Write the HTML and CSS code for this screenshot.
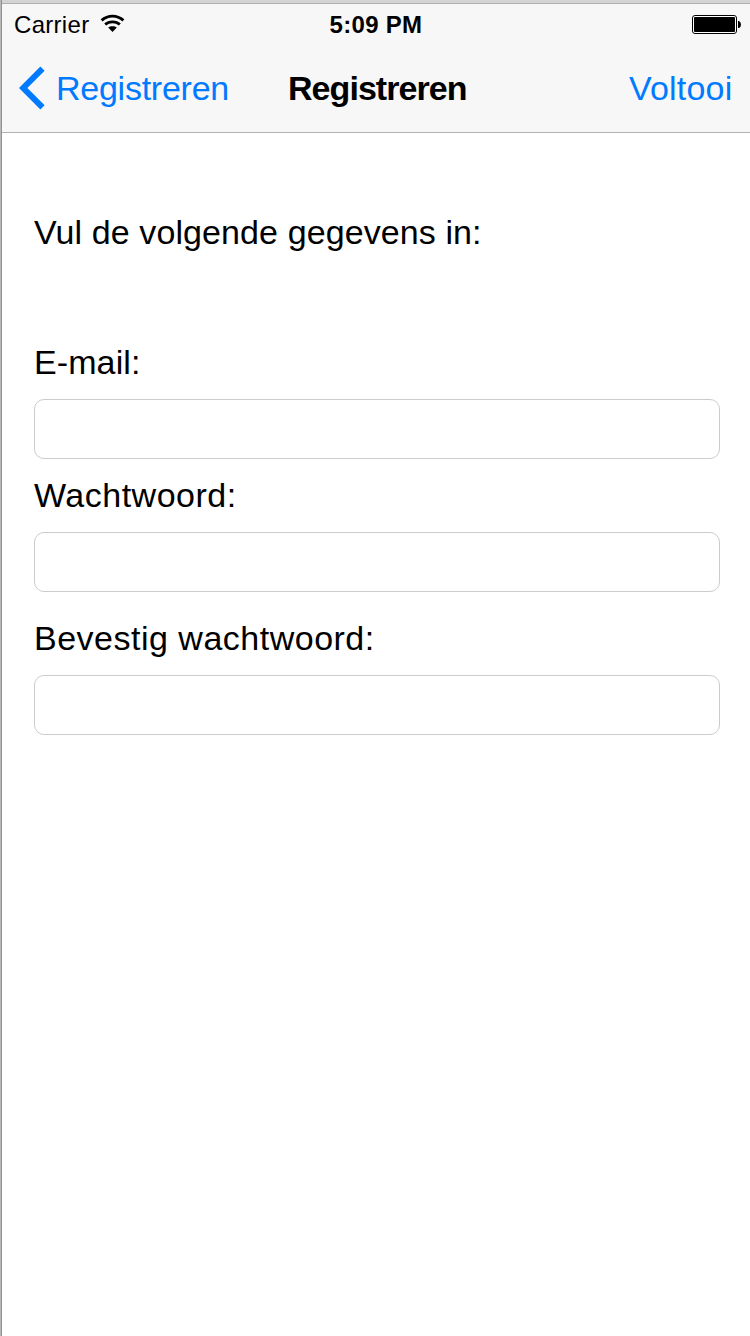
FILE: index.html
```html
<!DOCTYPE html>
<html lang="nl">
<head>
<meta charset="utf-8">
<title>Registreren</title>
<link rel="stylesheet" href="styles.css">
</head>
<body>
<div class="window">
  <div class="screen">
    <header class="header">
      <div class="status">
        <div class="status-left">
          <span class="carrier">Carrier</span>
          <svg class="wifi" width="26" height="20" viewBox="0 0 26 20">
            <g fill="none" stroke="#000" stroke-width="2.900">
              <path d="M1.600 6.300C8 .7 17 .7 23.400 6.300"/>
              <path d="M5.200 10.500C9 7 16 7 19.800 10.500"/>
            </g>
            <path d="M8.200 13.600C10.500 11.700 14.500 11.700 16.800 13.600L12.500 17.900Z"/>
          </svg>
        </div>
        <span class="time">5:09 PM</span>
        <svg class="battery" width="50" height="20" viewBox="0 0 50 20">
          <rect x=".5" y=".5" width="44" height="18" rx="2.500" fill="#fff" stroke="#000"/>
          <rect x="2" y="2" width="41" height="15" rx="1"/>
          <path d="M46 6h1q2 1 2 3.500t-2 3.500h-1z"/>
        </svg>
      </div>
      <nav class="nav">
        <a class="back">
          <svg class="chevron" width="27" height="44" viewBox="0 0 27 44"><path d="M23.500 2.700 4.200 22 23.500 41.300" fill="none" stroke="#007aff" stroke-width="6"/></svg>
          <span class="back-label">Registreren</span>
        </a>
        <h1 class="title">Registreren</h1>
        <a class="done">Voltooi</a>
      </nav>
    </header>
    <form class="form">
      <p class="intro">Vul de volgende gegevens in:</p>
      <label class="label label-email" for="email">E-mail:</label>
      <input class="field" id="email" type="email">
      <label class="label label-password" for="password">Wachtwoord:</label>
      <input class="field" id="password" type="password">
      <label class="label label-confirm" for="confirm">Bevestig wachtwoord:</label>
      <input class="field" id="confirm" type="password">
    </form>
  </div>
</div>
</body>
</html>
```
FILE: styles.css
```css
* { box-sizing: border-box; }
body { margin: 0; background: #fff; color: #000; font: 34px/40px "Liberation Sans", Arial, sans-serif; }
.window {
  height: 1336px;
  padding: 3px 0 0 2px;
  background: linear-gradient(90deg, #b8b8b8 0 1px, #929292 1px 2px, #d4d4d4 2px);
}
.screen { height: 1333px; border-top: 1px solid #b0b0b0; background: #fff; }
.header { height: 129px; background: #f7f7f7; border-bottom: 1px solid #b2b2b2; }
.status {
  display: grid;
  grid-template-columns: 1fr auto 1fr;
  height: 40px;
  padding: 0 8px 0 12px;
  font-size: 24px;
  line-height: 42px;
}
.status-left { display: flex; }
.carrier { width: 75px; margin-right: 11px; letter-spacing: .3px; }
.wifi { margin-top: 10px; }
.time { position: relative; left: -2px; font-weight: bold; font-size: 24px; letter-spacing: .3px; }
.battery { justify-self: end; margin-top: 11px; }
.nav { display: flex; height: 88px; padding: 24px 0 0 17px; color: #007aff; }
.back { display: flex; width: 269px; }
.chevron { margin-top: -2px; }
.back-label { margin-left: 10px; letter-spacing: -.25px; }
.title { width: 341px; margin: 0; color: #000; font-size: 34px; line-height: 40px; letter-spacing: -.95px; }
.done { white-space: nowrap; letter-spacing: .2px; }
.form { display: flex; flex-direction: column; padding: 79px 30px 0 32px; }
.intro { margin: 0; height: 40px; letter-spacing: .1px; }
.label { height: 40px; white-space: nowrap; }
.label-email { margin-top: 90px; margin-bottom: 17px; letter-spacing: .1px; }
.label-password { margin: 16px 0 17px; letter-spacing: .5px; }
.label-confirm { margin: 26px 0 17px; letter-spacing: .5px; }
.field { width: 686px; height: 60px; margin: 0; padding: 0 14px; border: 1px solid #ccc; border-radius: 10px; background: #fff; font: inherit; outline: none; }
```
